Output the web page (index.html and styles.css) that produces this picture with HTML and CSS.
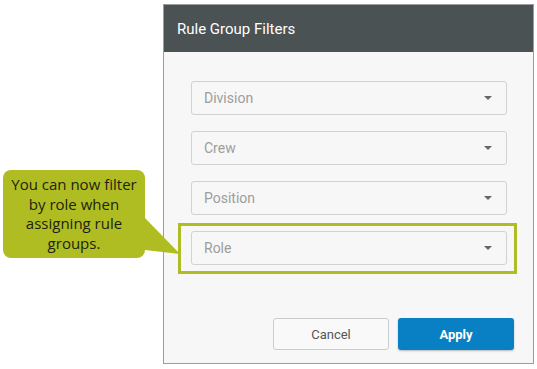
FILE: index.html
```html
<!DOCTYPE html>
<html lang="en">
<head>
    <meta charset="UTF-8">
    <title>Rule Group Filters</title>
    <link rel="stylesheet" href="styles.css">
</head>
<body>
    <div class="page">
        <div class="callout">
            <p>You can now filter by role when assigning rule groups.</p>
            <svg class="callout-tail" width="36" height="40" viewBox="0 0 36 40">
                <polygon points="0,0 35,36 0,32" fill="#afbd22"/>
            </svg>
        </div>

        <div class="dialog">
            <div class="dialog-header">Rule Group Filters</div>
            <div class="dialog-body">
                <div class="select"><span>Division</span><i class="caret"></i></div>
                <div class="select"><span>Crew</span><i class="caret"></i></div>
                <div class="select"><span>Position</span><i class="caret"></i></div>
                <div class="select highlight"><span>Role</span><i class="caret"></i></div>
            </div>
            <div class="dialog-footer">
                <button class="btn btn-cancel">Cancel</button>
                <button class="btn btn-apply">Apply</button>
            </div>
        </div>
    </div>
</body>
</html>
```

FILE: styles.css
```css
/* General */
* {
    margin: 0;
    padding: 0;
    box-sizing: border-box;
}

body {
    background-color: #ffffff;
    font-family: Roboto, "Liberation Sans", sans-serif;
}

.page {
    position: relative;
    width: 537px;
    height: 369px;
    padding: 4px 0 0 163px;
}

/* Callout note */
.callout {
    position: absolute;
    left: 3px;
    top: 170px;
    width: 142px;
    height: 88px;
    background-color: #afbd22;
    border-radius: 8px;
    display: flex;
    align-items: center;
    justify-content: center;
    padding: 0 4px;
    z-index: 2;
}

.callout p {
    font-family: "Open Sans", sans-serif;
    font-size: 15px;
    line-height: 19.5px;
    color: #1d2310;
    text-align: center;
}

.callout-tail {
    position: absolute;
    left: 142px;
    top: 48px;
}

/* Dialog */
.dialog {
    width: 371px;
    height: 360px;
    border: 1px solid #9c9c9c;
    background-color: #f7f7f7;
    display: flex;
    flex-direction: column;
}

.dialog-header {
    height: 47px;
    background-color: #4b5254;
    color: #ffffff;
    font-size: 15px;
    padding-left: 13px;
    display: flex;
    align-items: center;
}

.dialog-body {
    padding: 29px 26px 0 27px;
    display: flex;
    flex-direction: column;
    gap: 16px;
}

.select {
    position: relative;
    height: 34px;
    border: 1px solid #d2d2d2;
    border-radius: 3px;
    background-color: #f7f7f7;
    display: flex;
    align-items: center;
    justify-content: space-between;
    padding: 0 14px 0 12px;
    font-size: 14px;
    color: #9d9d9d;
}

.caret {
    width: 0;
    height: 0;
    border-left: 4px solid transparent;
    border-right: 4px solid transparent;
    border-top: 4px solid #666666;
}

.highlight::after {
    content: "";
    position: absolute;
    left: -14px;
    right: -11px;
    top: -9px;
    bottom: -10px;
    border: 3px solid #afbd22;
}

/* Footer buttons */
.dialog-footer {
    margin-top: auto;
    padding: 0 19px 13px 0;
    display: flex;
    justify-content: flex-end;
    gap: 9px;
}

.btn {
    width: 116px;
    height: 32px;
    border-radius: 3px;
    font-family: Roboto, sans-serif;
    font-size: 13px;
}

.btn-cancel {
    background-color: #f9f9f9;
    border: 1px solid #cccccc;
    color: #555555;
}

.btn-apply {
    background-color: #0a80c4;
    border: none;
    color: #ffffff;
    font-weight: bold;
    box-shadow: 0 1px 2px rgba(0, 0, 0, 0.25);
}
```
